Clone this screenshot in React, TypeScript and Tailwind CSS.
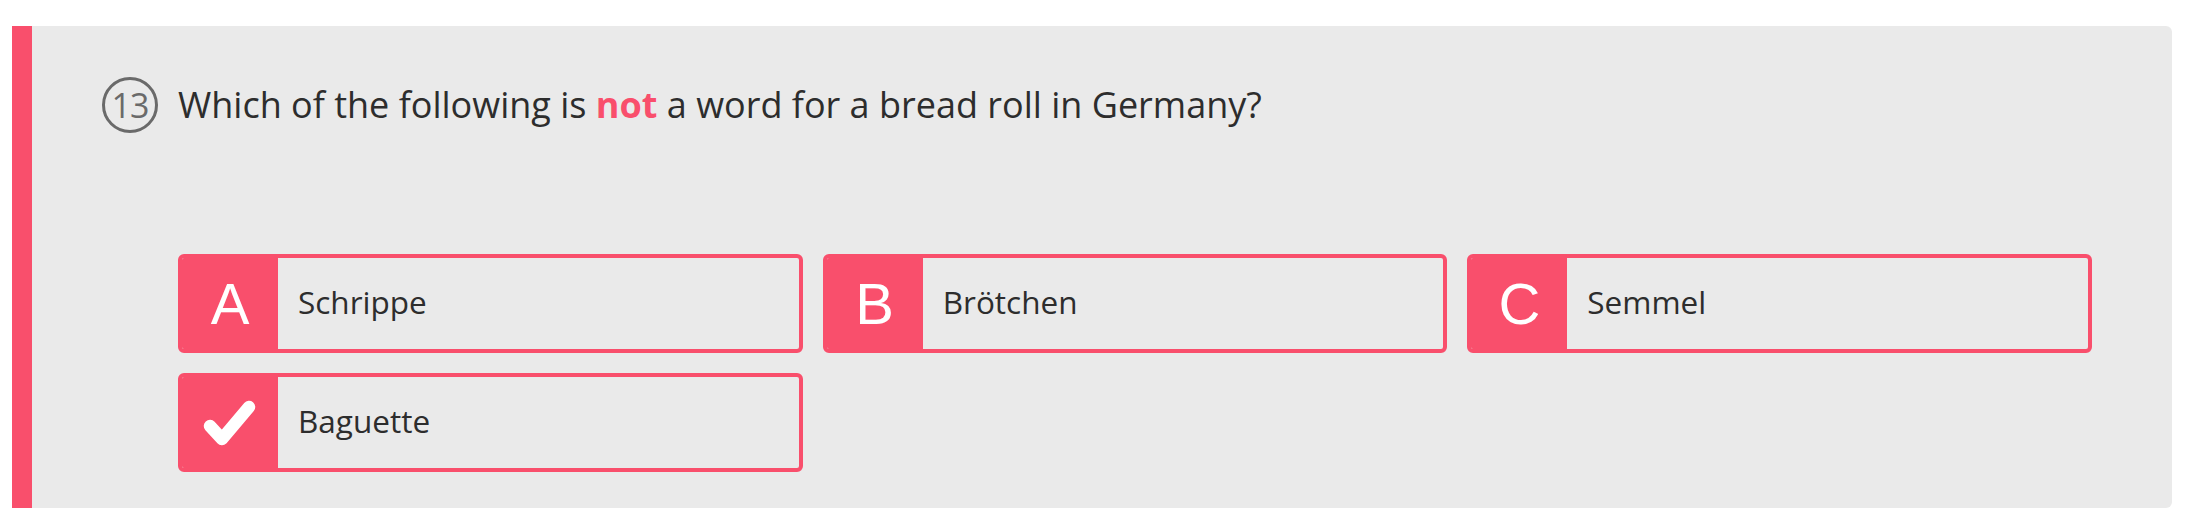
import React from "react";

function Check() {
  return (
    <svg width="56" height="48" viewBox="0 0 56 48" fill="none">
      <polyline
        points="8,27 20,40 47,8"
        stroke="#ffffff"
        strokeWidth="12.5"
        strokeLinecap="round"
        strokeLinejoin="round"
      />
    </svg>
  );
}

function Answer({ mark, text }: { mark: React.ReactNode; text: string }) {
  return (
    <div className="flex h-[99px] overflow-hidden rounded-[6px] border-4 border-[#f94f6c] bg-[#eaeaea]">
      <div
        className="flex w-[96px] shrink-0 items-center justify-center bg-[#f94f6c] text-[58px] leading-none text-white"
        style={{ fontFamily: '"Liberation Sans", Arial, sans-serif' }}
      >
        {mark}
      </div>
      <div className="flex items-center pb-[3px] pl-[20px] text-[31.5px] text-[#2d2d2d]">{text}</div>
    </div>
  );
}

export default function App() {
  return (
    <div
      className="min-h-[524px] bg-white pt-[26px] pl-[12px] pr-[13px]"
      style={{ fontFamily: '"Open Sans", "Noto Sans", sans-serif' }}
    >
      <div className="flex h-[482px] overflow-hidden rounded-r-[6px] bg-[#eaeaea]">
        <div className="w-[20px] shrink-0 bg-[#f94f6c]" />
        <div className="flex flex-1 flex-col pt-[49px] pl-[70px] pr-[80px]">
          <div className="flex h-[60px] items-center gap-[20px]">
            <div className="flex h-[56px] w-[56px] shrink-0 items-center justify-center rounded-full border-[3px] border-[#6a6a6a] text-[34px] leading-none tracking-[-1px] text-[#6a6a6a]">
              13
            </div>
            <div className="whitespace-nowrap text-[36px] text-[#2d2d2d]">
              Which of the following is <span className="font-bold text-[#f94f6c]">not</span> a word for a bread roll in Germany?
            </div>
          </div>
          <div className="mt-[119px] ml-[76px] grid grid-cols-3 gap-x-[20px] gap-y-[20px]">
            <Answer mark="A" text="Schrippe" />
            <Answer mark="B" text="Brötchen" />
            <Answer mark="C" text="Semmel" />
            <Answer mark={<Check />} text="Baguette" />
          </div>
        </div>
      </div>
    </div>
  );
}
